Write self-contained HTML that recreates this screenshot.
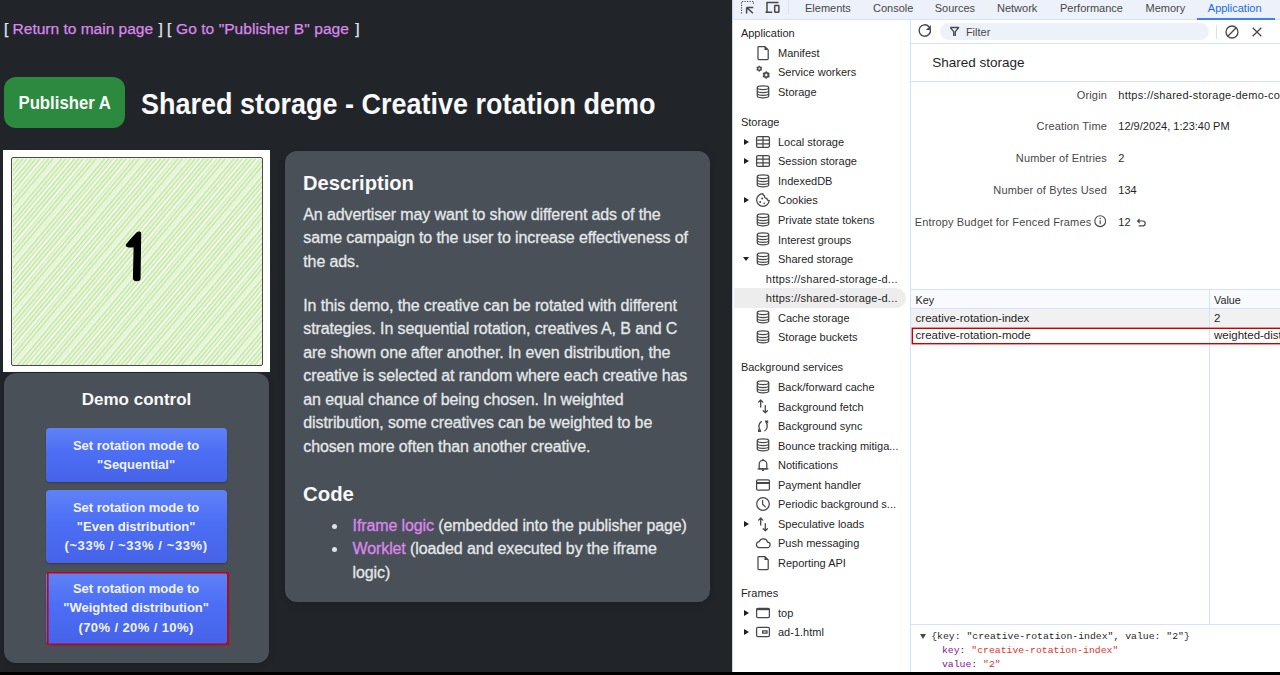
<!DOCTYPE html>
<html><head><meta charset="utf-8">
<style>
*{box-sizing:border-box;margin:0;padding:0}
html,body{width:1280px;height:675px;overflow:hidden;background:#000}
body{position:relative;font-family:"Liberation Sans",sans-serif}
.abs{position:absolute;white-space:nowrap}
#page{position:absolute;left:0;top:0;width:732px;height:672px;background:#212529;color:#dee2e6}
.lnk{color:#dd86f0}
#links{left:4px;top:17px;font-size:15.5px;line-height:24px;color:#e4e7ea;-webkit-text-stroke:0.25px currentColor}
#badge{left:4px;top:77px;width:121px;height:51px;border-radius:12px;background:#2b8a3e;color:#f8f9fa;font-weight:bold;font-size:18px;line-height:51px;padding-top:0.7px;text-align:center}
#badge span{display:inline-block;transform:scaleX(0.93)}
#title{left:141px;top:86.65px;font-size:29px;font-weight:bold;color:#f8f9fa;line-height:34px;transform:scaleX(0.931);transform-origin:0 0}
#frame{left:3px;top:150px;width:267px;height:222px;background:#fff}
#ad{left:8px;top:7px;width:252px;height:209px;border:1.6px solid #4a4a4a;border-radius:2px;background:#eaf7df}
#card1{left:4px;top:373px;width:265px;height:290px;border-radius:12px;background:#495057;box-shadow:0 2px 6px rgba(0,0,0,.18)}
#card2{left:285px;top:151px;width:425px;height:451px;border-radius:12px;background:#495057;box-shadow:0 2px 6px rgba(0,0,0,.18)}
.btn{position:absolute;left:41.5px;width:181px;border-radius:4px;color:#f1f3f5;font-weight:bold;font-size:13px;line-height:19.3px;text-align:center;
 background:linear-gradient(180deg,#5f82f7 0%,#4c6ef5 45%,#4663e8 100%);box-shadow:0 1px 2px rgba(0,0,0,.25)}
.ptxt{font-size:16px;line-height:23.45px;letter-spacing:-0.12px;color:#e4e7ea;-webkit-text-stroke:0.3px currentColor}
.h{font-weight:bold;color:#f8f9fa}
/* devtools */
#dt{position:absolute;left:732px;top:0;width:548px;height:672px;background:#fff;border-left:1px solid #c9d6ee;color:#1f1f1f;font-size:11px}
#tabs{position:absolute;left:0;top:0;width:547px;height:20px;background:#edf2fa;border-bottom:1px solid #d3e3fd}
.tab{position:absolute;top:3px;font-size:11px;line-height:11px;color:#474747}
#side{position:absolute;left:0;top:20px;width:178px;height:652px;background:#fff;border-right:1px solid #d3e3fd}
.si{position:absolute;font-size:11px;line-height:12px;color:#1f1f1f}
.sh{position:absolute;font-size:11px;line-height:12px;color:#1f1f1f;left:8px}
svg.ic{position:absolute;overflow:visible}
.tri{position:absolute;width:0;height:0;border-top:4px solid transparent;border-bottom:4px solid transparent;border-left:5px solid #1f1f1f}
.trid{position:absolute;width:0;height:0;border-left:4px solid transparent;border-right:4px solid transparent;border-top:5px solid #1f1f1f}
#main{position:absolute;left:179px;top:20px;width:369px;height:652px}
.lbl{position:absolute;right:173px;font-size:11px;line-height:12px;color:#474747;text-align:right}
.val{position:absolute;left:207px;font-size:11px;line-height:12px;color:#1f1f1f}
.dtt{font-size:11px;line-height:12px}
.dts{font-size:11px;line-height:12px;color:#1f1f1f}
.dtr{font-size:11.5px;line-height:12px;color:#1f1f1f}
.mono{font-family:"Liberation Mono",monospace;font-size:9.8px;line-height:12px}
</style></head><body>
<div id="page">
  <div id="links" class="abs"><span class="abs" style="left:0">[</span><span class="abs lnk" style="left:8.6px">Return to main page</span><span class="abs" style="left:154.4px">]</span><span class="abs" style="left:163px">[</span><span class="abs lnk" style="left:172px;letter-spacing:0.07px">Go to "Publisher B" page</span><span class="abs" style="left:351.2px">]</span></div>
  <div id="badge" class="abs"><span>Publisher A</span></div>
  <div id="title" class="abs">Shared storage - Creative rotation demo</div>
  <div id="frame" class="abs"><div id="ad" class="abs"></div><svg class="abs" style="left:9.6px;top:8.6px" width="249" height="206"><defs><pattern id="hp" width="3.3" height="40" patternUnits="userSpaceOnUse" patternTransform="rotate(40)"><rect x="0" y="0" width="1.5" height="40" fill="#c8e7aa"/></pattern><pattern id="hp2" width="11" height="40" patternUnits="userSpaceOnUse" patternTransform="rotate(40)"><rect x="0" y="0" width="2" height="40" fill="#ffffff" fill-opacity="0.5"/></pattern></defs><rect width="249" height="206" fill="url(#hp)"/><rect width="249" height="206" fill="url(#hp2)"/></svg><svg class="abs" style="left:0;top:0" width="267" height="222"><path transform="translate(-3,-150)" d="M136.5,232.5 Q138,231.3 140,231.6 Q141.3,232 141.2,234 L140.6,278.5 Q140.4,281.3 137,281.3 Q133,281.3 132.9,278 L133.6,247.2 Q130,248 127,247 Q125.2,246 126,244.3 Q131,238 136.5,232.5 Z" fill="#000"/></svg></div>
  <div id="card1" class="abs"></div>
  <div class="abs h" style="left:4px;width:265px;top:389.5px;font-size:17px;line-height:20px;text-align:center">Demo control</div>
  <div class="btn" style="left:45.6px;top:428px;height:54px;padding-top:7.8px">Set rotation mode to<br>"Sequential"</div>
  <div class="btn" style="left:45.6px;top:490.2px;height:73px;padding-top:7.7px">Set rotation mode to<br>"Even distribution"<br><span style="letter-spacing:0.6px">(~33% / ~33% / ~33%)</span></div>
  <div class="btn" style="left:45.6px;top:571.5px;height:72.2px;padding-top:7.7px">Set rotation mode to<br>"Weighted distribution"<br><span style="letter-spacing:0.4px">(70% / 20% / 10%)</span></div>
  <div class="abs" style="left:46.6px;top:572.2px;width:182.4px;height:72.8px;border:1px solid #c4001a;box-shadow:inset 0 0 0 0.6px #c4001a"></div>
  <div id="card2" class="abs"></div>
  <div class="abs h" style="left:303.3px;top:170.8px;font-size:21px;line-height:24px;transform:scaleX(0.96);transform-origin:0 0">Description</div>
  <div class="abs ptxt" style="left:303.3px;top:202.7px">An advertiser may want to show different ads of the<br>same campaign to the user to increase effectiveness of<br>the ads.</div>
  <div class="abs ptxt" style="left:303.3px;top:294px">In this demo, the creative can be rotated with different<br>strategies. In sequential rotation, creatives A, B and C<br>are shown one after another. In even distribution, the<br>creative is selected at random where each creative has<br>an equal chance of being chosen. In weighted<br>distribution, some creatives can be weighted to be<br>chosen more often than another creative.</div>
  <div class="abs h" style="left:303.3px;top:482.2px;font-size:21px;line-height:24px;transform:scaleX(0.97);transform-origin:0 0">Code</div>
  <div class="abs" style="left:332.3px;top:524px;width:5px;height:5px;border-radius:50%;background:#dee2e6"></div>
  <div class="abs" style="left:332.3px;top:547.4px;width:5px;height:5px;border-radius:50%;background:#dee2e6"></div>
  <div class="abs ptxt" style="left:352.6px;top:513.9px"><span class="lnk">Iframe logic</span> (embedded into the publisher page)<br><span class="lnk">Worklet</span> (loaded and executed by the iframe<br>logic)</div>
</div>
<div id="dtwrap">
<svg width="0" height="0" style="position:absolute">
<defs>
<symbol id="i-db" viewBox="0 0 16 16"><g fill="none" stroke="#474747" stroke-width="1.25"><ellipse cx="8" cy="3.7" rx="5.7" ry="1.8"/><path d="M2.3,3.7 V12 C2.3,13 4.9,13.8 8,13.8 C11.1,13.8 13.7,13 13.7,12 V3.7"/><path d="M2.3,6.7 C2.3,7.7 4.9,8.5 8,8.5 C11.1,8.5 13.7,7.7 13.7,6.7"/><path d="M2.3,9.5 C2.3,10.5 4.9,11.3 8,11.3 C11.1,11.3 13.7,10.5 13.7,9.5"/></g></symbol>
<symbol id="i-grid" viewBox="0 0 16 16"><g fill="none" stroke="#474747" stroke-width="1.25"><rect x="1.6" y="2.6" width="12.8" height="10.8" rx="1.4"/><path d="M8,2.6 V13.4 M1.6,6.2 H14.4 M1.6,9.8 H14.4"/></g></symbol>
<symbol id="i-file" viewBox="0 0 16 16"><g fill="none" stroke="#474747" stroke-width="1.25" stroke-linejoin="round"><path d="M3.8,1.5 H9.7 L13.2,5 V13.7 Q13.2,14.5 12.4,14.5 H3.8 Q3,14.5 3,13.7 V2.3 Q3,1.5 3.8,1.5 Z"/></g><path d="M9.4,1.5 L13.2,5.3 V4.6 L10,1.5 Z" fill="#474747"/><path d="M9.5,1.6 V5.1 H13.1" fill="#474747"/></symbol>
<symbol id="i-gears" viewBox="0 0 16 16"><path fill-rule="evenodd" fill="#474747" stroke="#474747" stroke-width="0.4" stroke-linejoin="round" d="M4.30,1.70 L5.40,2.79 L6.90,3.20 L6.50,4.70 L6.90,6.20 L5.40,6.61 L4.30,7.70 L3.20,6.61 L1.70,6.20 L2.10,4.70 L1.70,3.20 L3.20,2.79Z M5.40,4.70 A1.1,1.1 0 1 0 3.20,4.70 A1.1,1.1 0 1 0 5.40,4.70Z M11.20,7.20 L12.60,8.58 L14.49,9.10 L14.00,11.00 L14.49,12.90 L12.60,13.42 L11.20,14.80 L9.80,13.42 L7.91,12.90 L8.40,11.00 L7.91,9.10 L9.80,8.58Z M12.70,11.00 A1.5,1.5 0 1 0 9.70,11.00 A1.5,1.5 0 1 0 12.70,11.00Z"/></symbol>
<symbol id="i-cookie" viewBox="0 0 16 16"><path d="M7.9,1.7 A6.3,6.3 0 1 0 14.2,8.6 A2,2 0 0 1 12,6.3 A1.9,1.9 0 0 1 9.6,3.9 A2,2 0 0 1 7.9,1.7 Z" fill="none" stroke="#474747" stroke-width="1.25" stroke-linejoin="round"/><circle cx="7.1" cy="6.4" r="1" fill="#474747"/><circle cx="5.2" cy="9.9" r="1" fill="#474747"/><circle cx="9.2" cy="11.3" r="0.85" fill="#474747"/></symbol>
<symbol id="i-updown" viewBox="0 0 16 16"><g fill="none" stroke="#474747" stroke-width="1.3" stroke-linecap="round" stroke-linejoin="round"><path d="M5.7,2 V9 M3.6,4.1 L5.7,2 L7.8,4.1"/><path d="M10.3,7.7 V14.8 M8.2,12.7 L10.3,14.8 L12.4,12.7"/></g></symbol>
<symbol id="i-sync" viewBox="0 0 16 16"><g fill="none" stroke="#474747" stroke-width="1.3" stroke-linecap="round"><path d="M6.4,3.6 C3.6,5.2 3,9.8 5.4,12.6"/><path d="M9.9,12.8 C12.6,11.1 13.1,6.6 10.7,3.6"/></g><path d="M3,10.4 V14 H6.6 Z" fill="#474747"/><path d="M13.2,5.8 V2.4 H9.6 Z" fill="#474747"/></symbol>
<symbol id="i-bell" viewBox="0 0 16 16"><g fill="none" stroke="#474747" stroke-width="1.25" stroke-linejoin="round"><path d="M4.2,11.8 V7.2 A3.8,3.8 0 0 1 11.8,7.2 V11.8 Z"/><path d="M2.6,11.8 H13.4 M8,2 V3.3 M7,13.4 H9"/></g></symbol>
<symbol id="i-card" viewBox="0 0 16 16"><g fill="none" stroke="#474747" stroke-width="1.25"><rect x="1.6" y="2.9" width="12.8" height="10.2" rx="1.2"/></g><rect x="1.6" y="5" width="12.8" height="2" fill="#474747"/></symbol>
<symbol id="i-clock" viewBox="0 0 16 16"><g fill="none" stroke="#474747" stroke-width="1.25" stroke-linecap="round"><circle cx="8" cy="8" r="6.3"/><path d="M7.6,4.3 V8.2 L10.3,10.9"/></g></symbol>
<symbol id="i-cloud" viewBox="0 0 16 16"><path d="M4.6,12.6 H12.3 A2.7,2.7 0 0 0 12.5,7.2 A4.3,4.3 0 0 0 4.3,6.6 A3,3 0 0 0 4.6,12.6 Z" fill="none" stroke="#474747" stroke-width="1.25"/></symbol>
<symbol id="i-frame" viewBox="0 0 16 16"><g fill="none" stroke="#474747" stroke-width="1.25"><rect x="1.6" y="3.4" width="12.8" height="9.2" rx="1.3"/></g><rect x="1.6" y="3.4" width="12.8" height="1.8" fill="#474747"/></symbol>
<symbol id="i-adframe" viewBox="0 0 16 16"><g fill="none" stroke="#474747" stroke-width="1.25"><rect x="1.6" y="3.4" width="12.8" height="9.2" rx="1.3"/><rect x="7.6" y="6.9" width="4.4" height="2.2"/></g></symbol>
</defs></svg>
<div class="abs" style="left:732px;top:0;width:548px;height:672px;background:#fff"></div>
<div class="abs" style="left:732px;top:0;width:1px;height:672px;background:#c7d3ea"></div>
<div class="abs" style="left:733px;top:0;width:547px;height:19px;background:#edf2fa"></div>
<div class="abs" style="left:733px;top:19px;width:547px;height:1px;background:#d3e3fd"></div>
<svg class="ic" style="left:740px;top:0px" width="16" height="16" viewBox="0 0 16 16"><g fill="none" stroke="#474747" stroke-width="1.1" stroke-dasharray="1.2 1.3"><path d="M1.5,13.5 V1.5 H13.5 V4.5"/></g><g fill="none" stroke="#474747" stroke-width="1.5"><path d="M6.6,7.4 H13.3 M6.6,7.4 V13.6 M6.6,7.4 L12.9,13.3"/></g></svg>
<svg class="ic" style="left:764px;top:0px" width="18" height="16" viewBox="0 0 18 16"><g fill="none" stroke="#474747" stroke-width="1.5"><path d="M14.5,2.6 H3 V12.2 M1.5,12.3 H8.2"/><rect x="10.7" y="5.6" width="4.2" height="6.6" rx="0.4"/></g></svg>
<div class="abs" style="left:788px;top:0;width:1px;height:15px;background:#d3e3fd"></div>
<div class="abs dtt" style="left:805px;top:1.89px;color:#474747">Elements</div>
<div class="abs dtt" style="left:873px;top:1.89px;color:#474747">Console</div>
<div class="abs dtt" style="left:934.7px;top:1.89px;color:#474747">Sources</div>
<div class="abs dtt" style="left:997px;top:1.89px;color:#474747">Network</div>
<div class="abs dtt" style="left:1060px;top:1.89px;color:#474747">Performance</div>
<div class="abs dtt" style="left:1145.5px;top:1.89px;color:#474747">Memory</div>
<div class="abs dtt" style="left:1207.8px;top:1.89px;color:#1a6ae3">Application</div>
<div class="abs" style="left:1197px;top:18px;width:77.5px;height:2px;background:#3d82f2"></div>
<div class="abs" style="left:910px;top:20px;width:1px;height:652px;background:#d3e3fd"></div>
<div class="abs dts" style="left:740.9px;top:27.39px;">Application</div>
<div class="abs dts" style="left:778px;top:46.99px;">Manifest</div>
<svg class="ic" style="left:755.2px;top:44.60px" width="16" height="16"><use href="#i-file"/></svg>
<div class="abs dts" style="left:778px;top:66.49px;">Service workers</div>
<svg class="ic" style="left:755.2px;top:64.10px" width="16" height="16"><use href="#i-gears"/></svg>
<div class="abs dts" style="left:778px;top:86.09px;">Storage</div>
<svg class="ic" style="left:755.2px;top:83.70px" width="16" height="16"><use href="#i-db"/></svg>
<div class="abs dts" style="left:740.9px;top:116.09px;">Storage</div>
<div class="abs dts" style="left:778px;top:135.89px;">Local storage</div>
<svg class="ic" style="left:755.2px;top:133.50px" width="16" height="16"><use href="#i-grid"/></svg>
<div class="abs" style="left:743.6px;top:138.50px;width:0;height:0;border-top:3px solid transparent;border-bottom:3px solid transparent;border-left:5.3px solid #1f1f1f"></div>
<div class="abs dts" style="left:778px;top:155.39px;">Session storage</div>
<svg class="ic" style="left:755.2px;top:153.00px" width="16" height="16"><use href="#i-grid"/></svg>
<div class="abs" style="left:743.6px;top:158.00px;width:0;height:0;border-top:3px solid transparent;border-bottom:3px solid transparent;border-left:5.3px solid #1f1f1f"></div>
<div class="abs dts" style="left:778px;top:174.99px;">IndexedDB</div>
<svg class="ic" style="left:755.2px;top:172.60px" width="16" height="16"><use href="#i-db"/></svg>
<div class="abs dts" style="left:778px;top:194.49px;">Cookies</div>
<svg class="ic" style="left:755.2px;top:192.10px" width="16" height="16"><use href="#i-cookie"/></svg>
<div class="abs" style="left:743.6px;top:197.10px;width:0;height:0;border-top:3px solid transparent;border-bottom:3px solid transparent;border-left:5.3px solid #1f1f1f"></div>
<div class="abs dts" style="left:778px;top:214.09px;">Private state tokens</div>
<svg class="ic" style="left:755.2px;top:211.70px" width="16" height="16"><use href="#i-db"/></svg>
<div class="abs dts" style="left:778px;top:233.59px;">Interest groups</div>
<svg class="ic" style="left:755.2px;top:231.20px" width="16" height="16"><use href="#i-db"/></svg>
<div class="abs dts" style="left:778px;top:253.19px;">Shared storage</div>
<svg class="ic" style="left:755.2px;top:250.80px" width="16" height="16"><use href="#i-db"/></svg>
<div class="abs" style="left:743.1px;top:256.60px;width:0;height:0;border-left:3px solid transparent;border-right:3px solid transparent;border-top:4.6px solid #1f1f1f"></div>
<div class="abs dts" style="left:765.8px;top:272.69px;letter-spacing:0.22px;">https://shared-storage-d...</div>
<div class="abs" style="left:733.5px;top:288.20px;width:172.5px;height:19.6px;background:#ededed;border-radius:0 10px 10px 0"></div>
<div class="abs dts" style="left:765.8px;top:292.19px;letter-spacing:0.22px;">https://shared-storage-d...</div>
<div class="abs dts" style="left:778px;top:311.79px;">Cache storage</div>
<svg class="ic" style="left:755.2px;top:309.40px" width="16" height="16"><use href="#i-db"/></svg>
<div class="abs dts" style="left:778px;top:331.29px;">Storage buckets</div>
<svg class="ic" style="left:755.2px;top:328.90px" width="16" height="16"><use href="#i-db"/></svg>
<div class="abs dts" style="left:740.9px;top:361.29px;">Background services</div>
<div class="abs dts" style="left:778px;top:381.09px;">Back/forward cache</div>
<svg class="ic" style="left:755.2px;top:378.70px" width="16" height="16"><use href="#i-db"/></svg>
<div class="abs dts" style="left:778px;top:400.69px;">Background fetch</div>
<svg class="ic" style="left:755.2px;top:398.30px" width="16" height="16"><use href="#i-updown"/></svg>
<div class="abs dts" style="left:778px;top:420.19px;">Background sync</div>
<svg class="ic" style="left:755.2px;top:417.80px" width="16" height="16"><use href="#i-sync"/></svg>
<div class="abs dts" style="left:778px;top:439.79px;">Bounce tracking mitiga...</div>
<svg class="ic" style="left:755.2px;top:437.40px" width="16" height="16"><use href="#i-db"/></svg>
<div class="abs dts" style="left:778px;top:459.29px;">Notifications</div>
<svg class="ic" style="left:755.2px;top:456.90px" width="16" height="16"><use href="#i-bell"/></svg>
<div class="abs dts" style="left:778px;top:478.89px;">Payment handler</div>
<svg class="ic" style="left:755.2px;top:476.50px" width="16" height="16"><use href="#i-card"/></svg>
<div class="abs dts" style="left:778px;top:498.39px;">Periodic background s...</div>
<svg class="ic" style="left:755.2px;top:496.00px" width="16" height="16"><use href="#i-clock"/></svg>
<div class="abs dts" style="left:778px;top:517.99px;">Speculative loads</div>
<svg class="ic" style="left:755.2px;top:515.60px" width="16" height="16"><use href="#i-updown"/></svg>
<div class="abs" style="left:743.6px;top:520.60px;width:0;height:0;border-top:3px solid transparent;border-bottom:3px solid transparent;border-left:5.3px solid #1f1f1f"></div>
<div class="abs dts" style="left:778px;top:537.49px;">Push messaging</div>
<svg class="ic" style="left:755.2px;top:535.10px" width="16" height="16"><use href="#i-cloud"/></svg>
<div class="abs dts" style="left:778px;top:557.09px;">Reporting API</div>
<svg class="ic" style="left:755.2px;top:554.70px" width="16" height="16"><use href="#i-file"/></svg>
<div class="abs dts" style="left:740.9px;top:587.09px;">Frames</div>
<div class="abs dts" style="left:778px;top:606.89px;">top</div>
<svg class="ic" style="left:755.2px;top:604.50px" width="16" height="16"><use href="#i-frame"/></svg>
<div class="abs" style="left:743.6px;top:609.50px;width:0;height:0;border-top:3px solid transparent;border-bottom:3px solid transparent;border-left:5.3px solid #1f1f1f"></div>
<div class="abs dts" style="left:778px;top:626.39px;">ad-1.html</div>
<svg class="ic" style="left:755.2px;top:624.00px" width="16" height="16"><use href="#i-adframe"/></svg>
<div class="abs" style="left:743.6px;top:629.00px;width:0;height:0;border-top:3px solid transparent;border-bottom:3px solid transparent;border-left:5.3px solid #1f1f1f"></div>
<div class="abs" style="left:911px;top:43px;width:369px;height:1px;background:#d3e3fd"></div>
<svg class="ic" style="left:917px;top:23.4px" width="16" height="16" viewBox="0 0 16 16"><g fill="none" stroke="#474747" stroke-width="1.4"><path d="M13.4,6.6 A5.7,5.7 0 1 1 12,3.7"/></g><path d="M13.9,1.9 V6.9 H8.9 Z" fill="#474747"/></svg>
<div class="abs" style="left:940.2px;top:22.9px;width:269.3px;height:17.6px;border-radius:9px;background:#edf2fa"></div>
<svg class="ic" style="left:949px;top:26px" width="11" height="11" viewBox="0 0 11 11"><g fill="none" stroke="#474747" stroke-width="1.3" stroke-linejoin="round"><path d="M1.3,1.5 H9.7 L6.3,5.6 V10 M4.7,10 V5.6 L1.3,1.5"/></g></svg>
<div class="abs dts" style="left:965.9px;top:25.79px;color:#474747">Filter</div>
<div class="abs" style="left:1216px;top:25px;width:1px;height:14px;background:#d3e3fd"></div>
<svg class="ic" style="left:1224.4px;top:23.7px" width="16" height="16" viewBox="0 0 16 16"><g fill="none" stroke="#474747" stroke-width="1.3"><circle cx="8" cy="8" r="6"/><path d="M3.8,12.2 L12.2,3.8"/></g></svg>
<svg class="ic" style="left:1248.5px;top:23.7px" width="16" height="16" viewBox="0 0 16 16"><g fill="none" stroke="#474747" stroke-width="1.3"><path d="M3.7,3.7 L12.3,12.3 M12.3,3.7 L3.7,12.3"/></g></svg>
<div class="abs" style="left:932.3px;top:55.12px;font-size:13.5px;line-height:16px;color:#1f1f1f">Shared storage</div>
<div class="abs" style="left:911px;top:81px;width:369px;height:1px;background:#d3e3fd"></div>
<div class="abs dts" style="right:173px;top:88.69px;color:#474747;letter-spacing:0.15px">Origin</div>
<div class="abs dts" style="left:1118.3px;top:88.69px;letter-spacing:0.28px;">https://shared-storage-demo-content-producer.web.app</div>
<div class="abs dts" style="right:173px;top:120.49px;color:#474747;letter-spacing:0.15px">Creation Time</div>
<div class="abs dts" style="left:1118.3px;top:120.49px;">12/9/2024, 1:23:40 PM</div>
<div class="abs dts" style="right:173px;top:152.19px;color:#474747;letter-spacing:0.15px">Number of Entries</div>
<div class="abs dts" style="left:1118.3px;top:152.19px;">2</div>
<div class="abs dts" style="right:173px;top:184.49px;color:#474747;letter-spacing:0.15px">Number of Bytes Used</div>
<div class="abs dts" style="left:1118.3px;top:184.49px;">134</div>
<div class="abs dts" style="right:188.70000000000005px;top:215.99px;color:#474747;letter-spacing:0.15px">Entropy Budget for Fenced Frames</div>
<div class="abs dts" style="left:1118.3px;top:215.99px;">12</div>
<svg class="ic" style="left:1094px;top:215px" width="12.4" height="12.4" viewBox="0 0 12.4 12.4"><circle cx="6.2" cy="6.2" r="5.4" fill="none" stroke="#474747" stroke-width="1.1"/><path d="M6.2,5.2 V9.3" stroke="#474747" stroke-width="1.1"/><circle cx="6.2" cy="3.5" r="0.7" fill="#474747"/></svg>
<svg class="ic" style="left:1136px;top:217px" width="10" height="10" viewBox="0 0 10 10"><g fill="none" stroke="#474747" stroke-width="1.2"><path d="M2.5,4 H6.8 A2.4,2.4 0 0 1 6.8,8.8 H2.6"/></g><path d="M0.8,4 L3.6,1.3 V6.7 Z" fill="#474747"/></svg>
<div class="abs" style="left:911px;top:289px;width:369px;height:19px;background:#f8fafd"></div>
<div class="abs" style="left:911px;top:289px;width:369px;height:1px;background:#d3e3fd"></div>
<div class="abs" style="left:911px;top:308px;width:369px;height:1px;background:#d3e3fd"></div>
<div class="abs" style="left:911px;top:309px;width:369px;height:19.3px;background:#f1f1f1"></div>
<div class="abs" style="left:1209px;top:289px;width:1px;height:335px;background:#d3e3fd"></div>
<div class="abs" style="left:911px;top:624px;width:369px;height:1px;background:#d3e3fd"></div>
<div class="abs dtr" style="left:915.6px;top:293.56px;font-size:10.8px">Key</div>
<div class="abs dtr" style="left:1214px;top:293.56px;font-size:10.8px">Value</div>
<div class="abs dtr" style="left:915.6px;top:311.72px;font-size:11.5px">creative-rotation-index</div>
<div class="abs dtr" style="left:1214px;top:311.72px;font-size:11.5px">2</div>
<div class="abs dtr" style="left:915.6px;top:329.22px;font-size:11.5px">creative-rotation-mode</div>
<div class="abs dtr" style="left:1214px;top:329.22px;font-size:11.5px">weighted-distribution</div>
<div class="abs" style="left:912px;top:328px;width:380px;height:16px;border:1px solid #cc0000;box-shadow:0 0 0 0.4px #cc0000"></div>
<div class="abs" style="left:920px;top:633.8px;width:0;height:0;border-left:3.2px solid transparent;border-right:3.2px solid transparent;border-top:5px solid #474747"></div>
<div class="abs mono" style="left:931.2px;top:631.20px;color:#1f1f1f">{key: "creative-rotation-index", value: "2"}</div>
<div class="abs mono" style="left:941.9px;top:645.20px"><span style="color:#881391">key</span><span style="color:#1f1f1f">: </span><span style="color:#dc362e">"creative-rotation-index"</span></div>
<div class="abs mono" style="left:941.9px;top:659.10px"><span style="color:#881391">value</span><span style="color:#1f1f1f">: </span><span style="color:#dc362e">"2"</span></div>
</div>
<div class="abs" style="left:0;top:672px;width:1280px;height:3px;background:#000"></div>
</body></html>
